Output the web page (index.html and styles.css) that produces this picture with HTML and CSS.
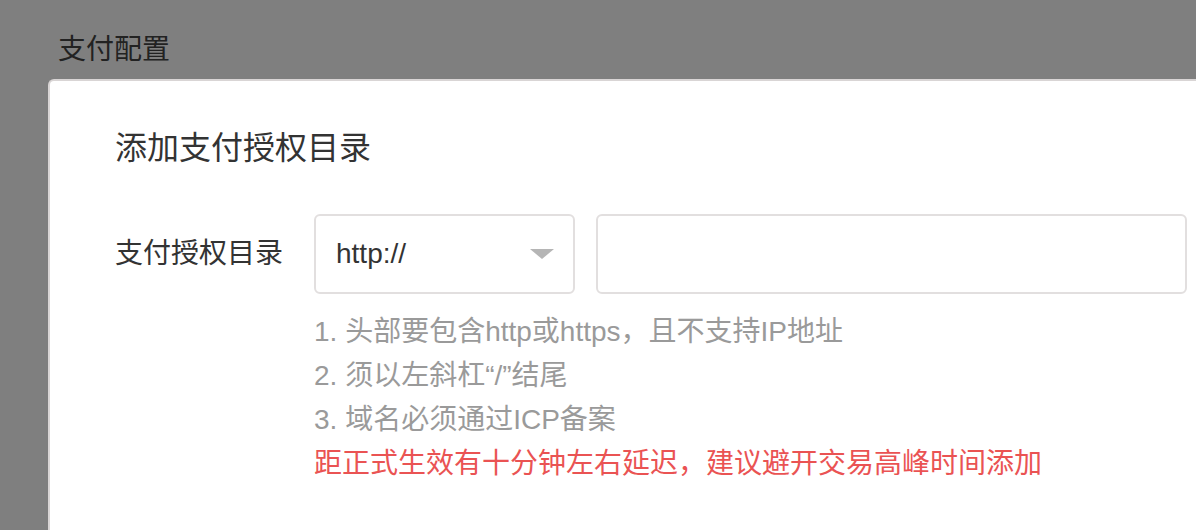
FILE: index.html
```html
<!DOCTYPE html>
<html lang="zh-CN">
<head>
<meta charset="utf-8">
<title>支付配置</title>
<link rel="stylesheet" href="styles.css">
</head>
<body>
<div class="page-title">支付配置</div>
<div class="modal">
  <div class="modal-title">添加支付授权目录</div>
  <div class="form-row">
    <div class="label">支付授权目录</div>
    <div class="select">
      <span class="select-value">http://</span>
      <span class="arrow"></span>
    </div>
    <div class="input"></div>
  </div>
  <div class="tips">
    <div class="tip">1. 头部要包含http或https，且不支持IP地址</div>
    <div class="tip">2. 须以左斜杠“/”结尾</div>
    <div class="tip">3. 域名必须通过ICP备案</div>
    <div class="tip warn">距正式生效有十分钟左右延迟，建议避开交易高峰时间添加</div>
  </div>
</div>
</body>
</html>
```

FILE: styles.css
```css
html, body {
  margin: 0;
  padding: 0;
  height: 100%;
  overflow: hidden;
}
body {
  background: #7f7f7f;
  font-family: "Liberation Sans", "Noto Sans CJK SC", sans-serif;
  color: #333;
  display: flex;
  flex-direction: column;
}
.page-title {
  flex: none;
  height: 49px;
  padding: 30px 0 0 58px;
  font-size: 28px;
  line-height: 40px;
  font-weight: 400;
  color: #222;
}
.modal {
  flex: 1;
  min-height: 0;
  margin-left: 48px;
  background: #fff;
  border-top: 2px solid #d9d5d5;
  border-left: 2px solid #d9d5d5;
  border-top-left-radius: 6px;
  padding: 45px 0 0 65px;
}
.modal-title {
  font-size: 32px;
  line-height: 44px;
  color: #333;
}
.form-row {
  display: flex;
  align-items: center;
  margin-top: 44px;
}
.label {
  width: 199px;
  font-size: 28px;
  line-height: 40px;
  color: #333;
}
.select {
  box-sizing: border-box;
  width: 261px;
  height: 80px;
  border: 2px solid #e2dfdf;
  border-radius: 6px;
  display: flex;
  align-items: center;
  justify-content: space-between;
  padding: 0 19px 0 20px;
}
.select-value {
  font-size: 28px;
  color: #333;
}
.arrow {
  width: 0;
  height: 0;
  border-left: 12px solid transparent;
  border-right: 12px solid transparent;
  border-top: 10px solid #b5b5b5;
}
.input {
  box-sizing: border-box;
  width: 591px;
  height: 80px;
  margin-left: 21px;
  border: 2px solid #e2dfdf;
  border-radius: 6px;
}
.tips {
  margin: 16px 0 0 199px;
}
.tip {
  font-size: 28px;
  line-height: 44px;
  color: #9a9a9a;
}
.tip.warn {
  color: #ea5353;
}
```
